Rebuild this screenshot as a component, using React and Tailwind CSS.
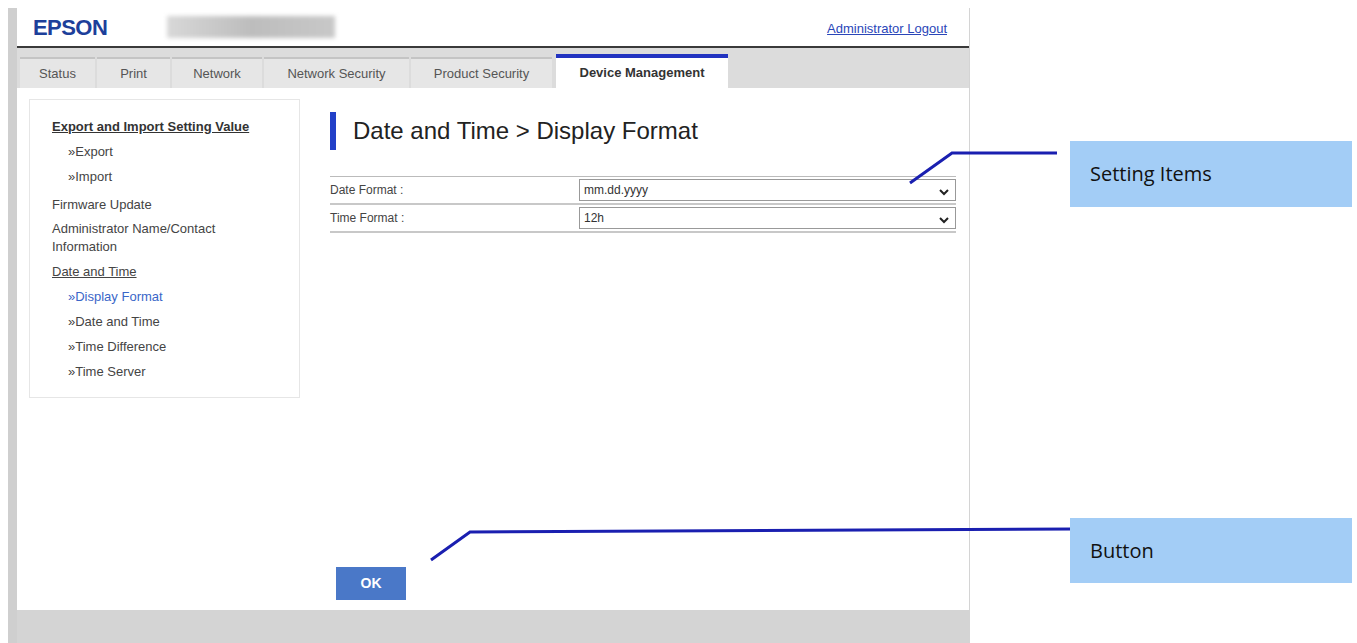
export default function App() {
  const tabs = [
    ["Status", "w-[75px]"],
    ["Print", "w-[73px]"],
    ["Network", "w-[90px]"],
    ["Network Security", "w-[145px]"],
    ["Product Security", "w-[141px]"],
  ];
  const Chev = () => (
    <svg width="10" height="8" viewBox="0 0 10 8" className="absolute right-[6px] top-[8px]">
      <path d="M1 2 L5 6 L9 2" stroke="#222" strokeWidth="2" fill="none" />
    </svg>
  );
  return (
    <div className="relative w-[1357px] h-[643px] bg-white overflow-hidden" style={{ fontFamily: '"Liberation Sans", Arial, sans-serif' }}>
      <div className="absolute left-[8px] top-[8px] w-[962px] h-[635px] flex border-l-[9px] border-[#cfcfcf] border-r border-r-[#d4d4d4]">
        <div className="flex-1 flex flex-col">
          <div className="h-[40px] flex items-center px-[16px] border-b-2 border-[#3a3a3a] bg-white">
            <div className="text-[22px] font-bold text-[#1d3f9a] tracking-tight">EPSON</div>
            <div className="ml-[60px] w-[168px] h-[22px] bg-gradient-to-r from-[#d8d8d8] via-[#bdbdbd] to-[#c8c8c8] blur-[2px]" />
            <div className="ml-auto text-[13px] text-[#2a46b8] underline mr-[6px] mt-[4px]">Administrator Logout</div>
          </div>
          <div className="h-[40px] bg-[#dcdcdc] flex items-end pl-[3px] gap-[2px]">
            {tabs.map(([t, w]) => (
              <div key={t} className={`${w} h-[31px] bg-[#e6e6e6] border-t-2 border-[#c4c4c4] flex items-center justify-center text-[13px] text-[#555]`}>{t}</div>
            ))}
            <div className="w-[172px] h-[34px] bg-white border-t-4 border-[#2233c0] flex items-center justify-center text-[13px] font-bold text-[#333] ml-[2px]">Device Management</div>
          </div>
          <div className="flex-1 bg-white flex relative">
            <div className="ml-[12px] mt-[11px] w-[271px] h-[299px] border border-[#e6e6e6] pl-[22px] pt-[17px] text-[13px] text-[#444] leading-[20px]">
              <div className="font-bold underline text-[#333]">Export and Import Setting Value</div>
              <div className="pl-[16px] mt-[5px]">»Export</div>
              <div className="pl-[16px] mt-[5px]">»Import</div>
              <div className="mt-[8px]">Firmware Update</div>
              <div className="mt-[5px] leading-[18px]">Administrator Name/Contact<br />Information</div>
              <div className="mt-[6px] underline">Date and Time</div>
              <div className="pl-[16px] mt-[5px] text-[#3a66c8]">»Display Format</div>
              <div className="pl-[16px] mt-[5px]">»Date and Time</div>
              <div className="pl-[16px] mt-[5px]">»Time Difference</div>
              <div className="pl-[16px] mt-[5px]">»Time Server</div>
            </div>
            <div className="ml-[30px] w-[626px] flex flex-col">
              <div className="flex items-center mt-[24px] h-[38px]">
                <div className="w-[6px] h-[38px] bg-[#2240c8]" />
                <div className="ml-[17px] text-[24px] text-[#222]">Date and Time &gt; Display Format</div>
              </div>
              <div className="mt-[26px] border-t border-[#bbb]">
                {[["Date Format :", "mm.dd.yyyy"], ["Time Format :", "12h"]].map(([l, v]) => (
                  <div key={l} className="h-[28px] border-b-2 border-[#c8c8c8] flex items-center text-[12px] text-[#444]">
                    <div className="w-[249px]">{l}</div>
                    <div className="relative flex-1 h-[22px] border border-[#999] flex items-center pl-[4px] text-[#333]">{v}<Chev /></div>
                  </div>
                ))}
              </div>
              <div className="mt-auto mb-[10px] ml-[6px] w-[70px] h-[33px] bg-[#4a78c8] text-white font-bold text-[14px] flex items-center justify-center">OK</div>
            </div>
          </div>
          <div className="h-[33px] bg-[#d4d4d4]" />
        </div>
      </div>
      <svg className="absolute left-0 top-0 pointer-events-none" width="1357" height="643">
        <polyline points="910,183 952,153 1057,153" stroke="#1a1fb0" strokeWidth="3" fill="none" />
        <polyline points="431,560 470,532 1073,529" stroke="#1a1fb0" strokeWidth="3" fill="none" />
      </svg>
      <div className="absolute left-[1070px] top-[141px] w-[282px] h-[66px] bg-[#a3cdf6] flex items-center pl-[20px] text-[20px] text-[#111]" style={{ fontFamily: '"Open Sans", sans-serif' }}>Setting Items</div>
      <div className="absolute left-[1070px] top-[518px] w-[282px] h-[65px] bg-[#a3cdf6] flex items-center pl-[20px] text-[20px] text-[#111]" style={{ fontFamily: '"Open Sans", sans-serif' }}>Button</div>
    </div>
  );
}
